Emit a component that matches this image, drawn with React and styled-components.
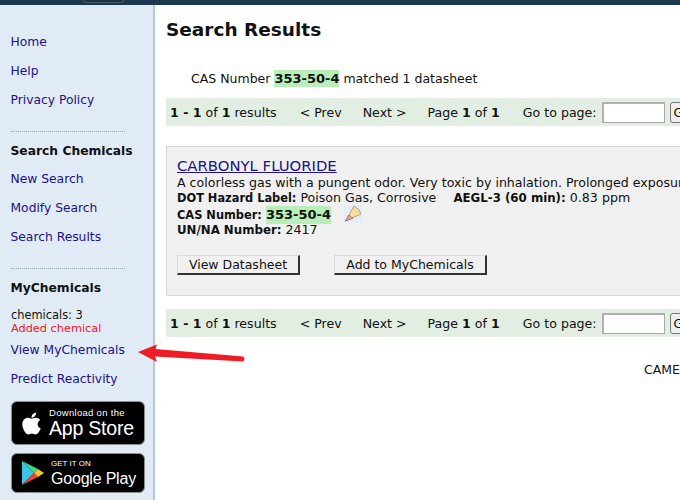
import React from "react";
import styled, { createGlobalStyle } from "styled-components";
import { FaApple } from "react-icons/fa";

const Global = createGlobalStyle`
  html, body { margin: 0; padding: 0; background: #fff; }
  body { font-family: "DejaVu Sans", Verdana, sans-serif; font-size: 12.5px; color: #111; }
  #root { width: 680px; height: 500px; overflow: hidden; }
`;

const Page = styled.div`
  width: 680px; height: 500px; position: relative; overflow: hidden;
  display: flex; flex-direction: column;
`;
const TopBar = styled.div`
  height: 5px; flex: none; background: #1b3a4f; display: flex; box-sizing: border-box; padding-left: 83px;
`;
const Notch = styled.div`
  width: 41px; height: 3px; border: 1px solid #46586a; border-top: 0; border-radius: 0 0 5px 5px; background: #22333f; box-sizing: border-box;
`;
const Body = styled.div`
  flex: 1; display: flex; min-height: 0;
`;
const Sidebar = styled.nav`
  width: 155px; flex: none; box-sizing: border-box; background: #e1ebf6;
  border-right: 2px solid #b3c7dc; padding: 27px 0 0 11px;
  display: flex; flex-direction: column;
`;
const NavLink = styled.a`
  display: block; color: #221188; font-size: 12.3px; line-height: 20px; height: ${p => p.$h || 29}px; text-decoration: none;
  white-space: nowrap; margin-left: -0.5px;
`;
const Divider = styled.div`
  width: 114px; border-top: 1px dotted #99aabb; margin: 12px 0 9px;
`;
const SectionTitle = styled.div`
  font-weight: 700; color: #111; font-size: 12.3px; line-height: 20px; height: ${p => p.$h}px; margin-left: -0.5px;
`;
const Count = styled.div`
  font-size: 11.4px; line-height: 14px; color: #111; margin-top: 10px;
`;
const Added = styled.div`
  font-size: 11.3px; line-height: 14px; color: #f0141e; margin-bottom: 4px;
`;
const StoreBadge = styled.a`
  display: flex; align-items: center; box-sizing: border-box; width: 134px; height: ${p => p.$h}px;
  background: #000; border: 1px solid #8c8c8c; border-radius: 6px; color: #fff;
  margin-bottom: ${p => p.$mb}px; padding-left: ${p => p.$pl}px; gap: ${p => p.$gap}px; text-decoration: none;
  font-family: "Liberation Sans", Arial, sans-serif;
`;
const BadgeText = styled.div`
  display: flex; flex-direction: column;
`;
const BadgeSmall = styled.span`
  font-size: ${p => p.$s}px; line-height: 11px; white-space: nowrap; letter-spacing: ${p => p.$ls || 0}px;
`;
const BadgeBig = styled.span`
  font-size: ${p => p.$s}px; line-height: ${p => p.$lh}px; white-space: nowrap; letter-spacing: -0.2px;
`;
const Main = styled.main`
  flex: 1; min-width: 0; overflow: hidden; padding: 0 0 0 11px; box-sizing: border-box;
`;
const Inner = styled.div`
  width: 640px;
`;
const Title = styled.h1`
  margin: 13px 0 0; font-size: 18.5px; line-height: 24px; font-weight: 700; color: #111;
`;
const Matched = styled.p`
  margin: 28px 0 0 25px; line-height: 18px; font-size: 12.5px; white-space: nowrap;
`;
const Highlight = styled.b`
  background: #b8efb8; padding: 1px 0; font-size: 13px;
`;
const Pager = styled.div`
  height: 28px; margin-top: ${p => p.$top}px; background: #e1eee1; display: flex; align-items: center;
  padding-left: 4px; white-space: nowrap; font-size: 12.6px;
`;
const PagerItem = styled.span`
  margin-left: ${p => p.$ml || 0}px;
`;
const GoInput = styled.input`
  width: 63px; height: 21px; box-sizing: border-box; margin: 0 0 0 5px; padding: 0; background: #fff;
  border-style: solid; border-width: 2px 1px 1px 2px; border-color: #b0b0b0 #a8a8a8 #a8a8a8 #b0b0b0;
`;
const GoButton = styled.button`
  margin-left: 5px; height: 21px; width: 40px; padding: 0 0 0 3px; text-align: left; font: 12.6px "DejaVu Sans", sans-serif; color: #111;
  background: #efefef; border: 1px solid #777; border-radius: 3px;
`;
const Card = styled.section`
  margin-top: 20px; height: 150px; box-sizing: border-box; background: #f0f0f0; border: 1px solid #d8d8d8; padding: 11px 0 0 10px; overflow: hidden;
`;
const ChemName = styled.a`
  display: block; font-size: 14.85px; line-height: 17px; margin-bottom: -0.5px; color: #221188; text-decoration: underline;
`;
const Line = styled.div`
  font-size: 12.6px; line-height: 15.7px; height: 15.7px; white-space: nowrap; display: flex; align-items: baseline;
`;
const Label = styled.b`
  white-space: pre; font-size: ${p => p.$s}px;
`;
const Gap = styled.span`
  width: ${p => p.$w}px; flex: none;
`;
const PencilIcon = styled.svg`
  width: 18px; height: 18px; margin: 0 0 0 13px; flex: none; align-self: center;
`;
const Actions = styled.div`
  display: flex; gap: 34px; margin-top: 17.7px;
`;
const ActionButton = styled.button`
  box-sizing: border-box; height: 20px; width: ${p => p.$w}px; padding: 0; background: #f0f0f0; color: #111;
  font: 12.5px "DejaVu Sans", sans-serif; border: 1px solid #dcdcdc; border-right: 2px solid #333; border-bottom: 2px solid #333;
`;
const Footer = styled.div`
  margin: 24px 0 0 478px; line-height: 18px; white-space: nowrap; font-size: 12.5px;
`;
const Arrow = styled.svg`
  position: absolute; left: 130px; top: 340px; width: 125px; height: 30px;
`;

const PagerRow = ({ top }) => (
  <Pager $top={top}>
    <PagerItem><b>1 - 1</b> of <b>1</b> results</PagerItem>
    <PagerItem $ml={23}>&lt; Prev</PagerItem>
    <PagerItem $ml={21}>Next &gt;</PagerItem>
    <PagerItem $ml={21}>Page <b>1</b> of <b>1</b></PagerItem>
    <PagerItem $ml={23}>Go to page:</PagerItem>
    <GoInput />
    <GoButton>Go</GoButton>
  </Pager>
);

export default function App() {
  return (
    <Page>
      <Global />
      <TopBar><Notch /></TopBar>
      <Body>
        <Sidebar>
          <NavLink>Home</NavLink>
          <NavLink>Help</NavLink>
          <NavLink>Privacy Policy</NavLink>
          <Divider />
          <SectionTitle $h={28}>Search Chemicals</SectionTitle>
          <NavLink>New Search</NavLink>
          <NavLink>Modify Search</NavLink>
          <NavLink>Search Results</NavLink>
          <Divider />
          <SectionTitle $h={20}>MyChemicals</SectionTitle>
          <Count>chemicals: 3</Count>
          <Added>Added chemical</Added>
          <NavLink>View MyChemicals</NavLink>
          <NavLink $h={32}>Predict Reactivity</NavLink>
          <StoreBadge $h={44} $mb={8} $pl={7} $gap={5}>
            <FaApple size={25} color="#fff" />
            <BadgeText>
              <BadgeSmall $s={9.5} $ls={0.3}>Download on the</BadgeSmall>
              <BadgeBig $s={19.5} $lh={21}>App Store</BadgeBig>
            </BadgeText>
          </StoreBadge>
          <StoreBadge $h={40} $mb={0} $pl={9} $gap={6}>
            <svg width="24" height="26" viewBox="0 0 24 26">
              <path d="M1 1 L13 13 L1 25 Z" fill="#3bc4e8" />
              <path d="M1 1 L17 9 L13 13 Z" fill="#3ddc84" />
              <path d="M1 25 L17 17 L13 13 Z" fill="#ea4335" />
              <path d="M17 9 L23 13 L17 17 L13 13 Z" fill="#fbc02d" />
            </svg>
            <BadgeText>
              <BadgeSmall $s={8}>GET IT ON</BadgeSmall>
              <BadgeBig $s={16} $lh={20}>Google Play</BadgeBig>
            </BadgeText>
          </StoreBadge>
        </Sidebar>
        <Main>
          <Inner>
            <Title>Search Results</Title>
            <Matched>CAS Number <Highlight>353-50-4</Highlight> matched 1 datasheet</Matched>
            <PagerRow top={10} />
            <Card>
              <ChemName>CARBONYL FLUORIDE</ChemName>
              <Line>A colorless gas with a pungent odor. Very toxic by inhalation. Prolonged exposure</Line>
              <Line><Label $s={11.4}>DOT Hazard Label: </Label>Poison Gas, Corrosive<Gap $w={17} /><Label $s={11.8}>AEGL-3 (60 min): </Label>0.83 ppm</Line>
              <Line><Label $s={11.4}>CAS Number: </Label><Highlight>353-50-4</Highlight>
                <PencilIcon viewBox="0 0 18 18">
                  <rect x="0" y="0" width="18" height="18" fill="#e4edf6" />
                  <path d="M1.5 16 L10 1 Q16 4 17 9 Z" fill="#f7dca0" stroke="#b8a080" strokeWidth="1" />
                  <path d="M1.5 16 L5 10 Q8 13 9 13 Z" fill="#f0a8a0" stroke="#8a6a60" strokeWidth="0.8" />
                </PencilIcon>
              </Line>
              <Line><Label $s={11.8}>UN/NA Number: </Label>2417</Line>
              <Actions>
                <ActionButton $w={123}>View Datasheet</ActionButton>
                <ActionButton $w={153}>Add to MyChemicals</ActionButton>
              </Actions>
            </Card>
            <PagerRow top={13} />
            <Footer>CAMEO Chemicals</Footer>
          </Inner>
        </Main>
      </Body>
      <Arrow viewBox="0 0 125 30">
        <path d="M8 12 L27 4.5 L25.5 9 L113 16.5 Q116 19 113 21.5 L25 16.5 L27 22 Z" fill="#ee1c25" />
      </Arrow>
    </Page>
  );
}
